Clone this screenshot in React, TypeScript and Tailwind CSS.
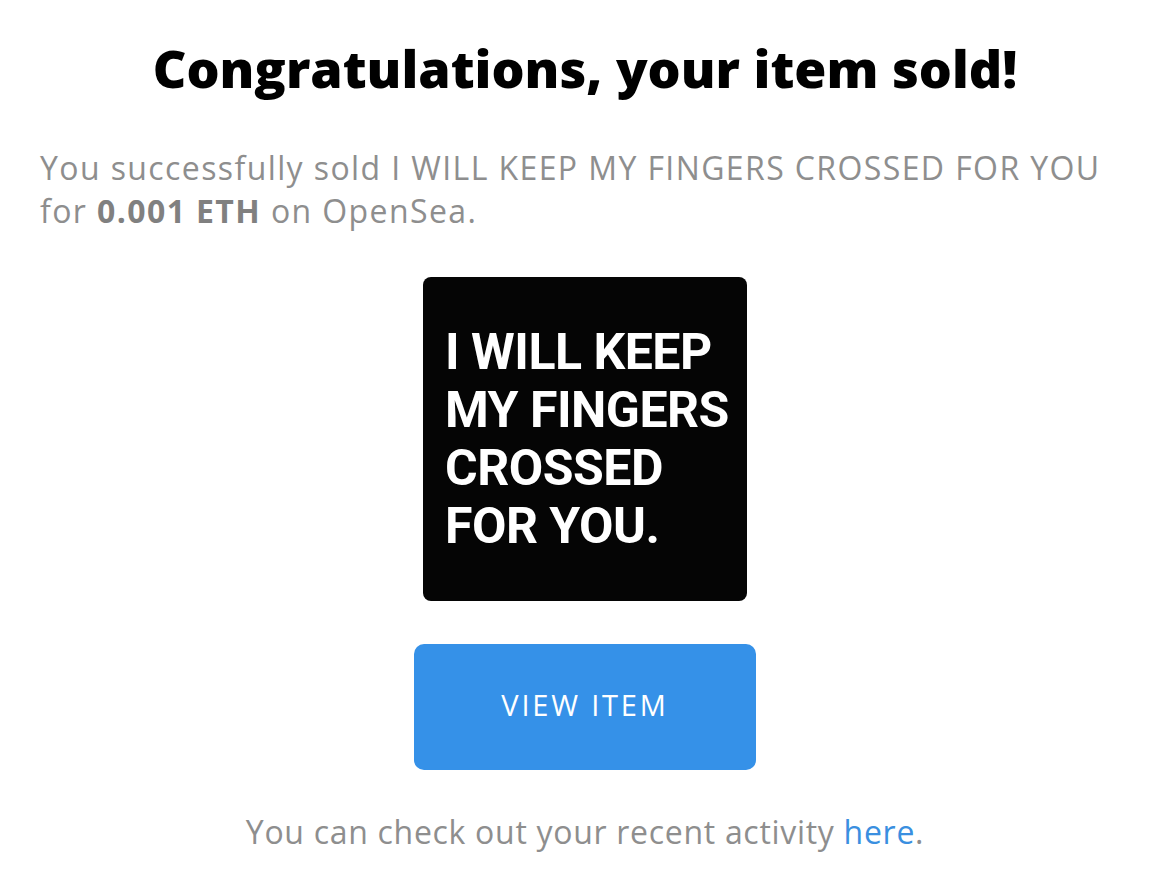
import React from 'react';

const App: React.FC = () => {
  return (
    <div className="w-[1170px] h-[896px] bg-white flex flex-col items-center font-['Open_Sans','Liberation_Sans',sans-serif]">
      <h1 className="mt-[34px] text-[52px] leading-[68px] font-extrabold text-black">
        Congratulations, your item sold!
      </h1>

      <p className="self-stretch px-[40px] mt-[44px] text-[32px] leading-[43px] tracking-[1.4px] text-[#8e8e8e]">
        You successfully sold I WILL KEEP MY FINGERS CROSSED FOR YOU
        <br />
        for <strong className="font-bold text-[#808080]">0.001 ETH</strong> on OpenSea.
      </p>

      <div className="mt-[45px] w-[324px] h-[324px] rounded-[8px] bg-[#050505] flex flex-col justify-center pl-[22px]">
        <p className="font-['Roboto','Liberation_Sans',sans-serif] font-bold text-white text-[50px] leading-[58px] tracking-[-0.5px] uppercase">
          I Will Keep
          <br />
          My Fingers
          <br />
          Crossed
          <br />
          For You.
        </p>
      </div>

      <button className="mt-[43px] w-[342px] h-[126px] rounded-[10px] bg-[#3591e8] text-white text-[29px] font-medium tracking-[2.8px] pb-[4px]">
        VIEW ITEM
      </button>

      <p className="mt-[40px] text-[32px] leading-[43px] tracking-[0.7px] text-[#8e8e8e]">
        You can check out your recent activity <a className="text-[#3a8fe0]">here</a>.
      </p>
    </div>
  );
};

export default App;
